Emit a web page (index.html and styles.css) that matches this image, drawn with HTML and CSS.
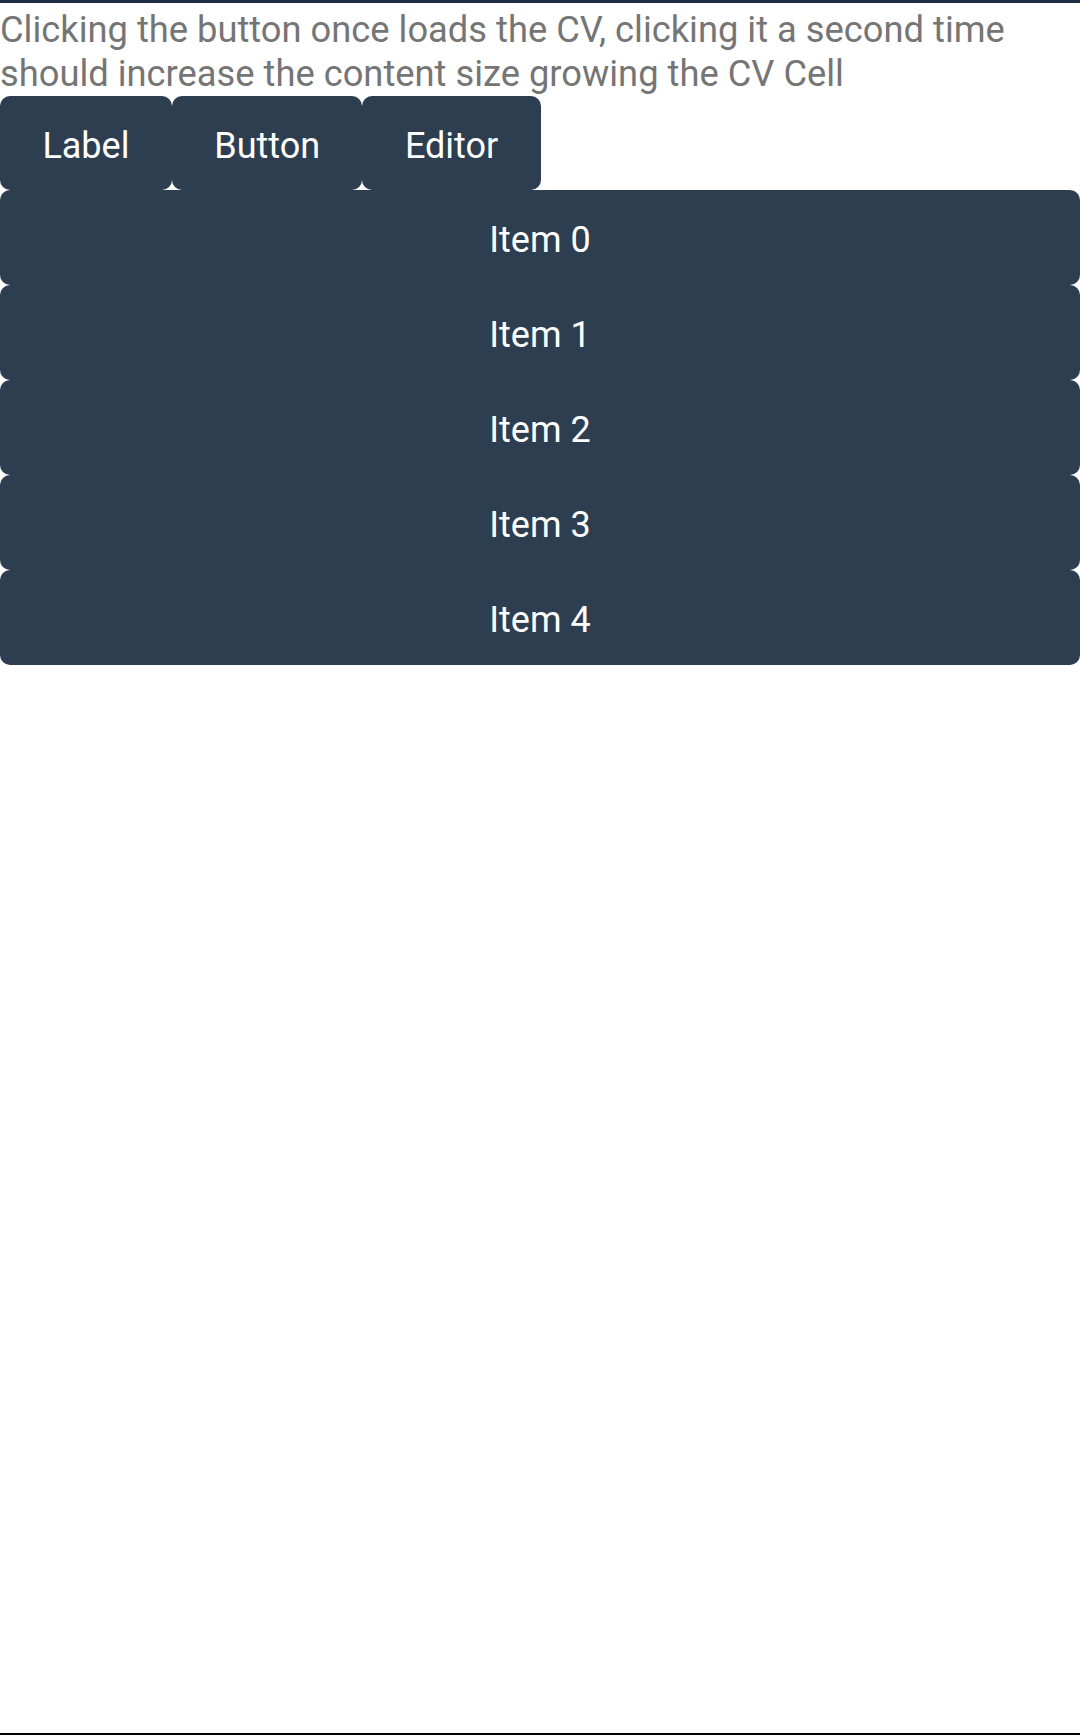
FILE: index.html
```html
<!DOCTYPE html>
<html>
<head>
<meta charset="utf-8">
<link rel="stylesheet" href="styles.css">
</head>
<body>
<div class="page">
  <div class="topbar"></div>
  <p class="desc">Clicking the button once loads the CV, clicking it a second time should increase the content size growing the CV Cell</p>
  <div class="btnrow">
    <div class="btn">Label</div>
    <div class="btn">Button</div>
    <div class="btn">Editor</div>
  </div>
  <div class="items">
    <div class="item">Item 0</div>
    <div class="item">Item 1</div>
    <div class="item">Item 2</div>
    <div class="item">Item 3</div>
    <div class="item">Item 4</div>
  </div>
  <div class="spacer"></div>
  <div class="bottomline"></div>
</div>
</body>
</html>
```
FILE: styles.css
```css
html, body {
  margin: 0;
  padding: 0;
  background: #ffffff;
}
.page {
  width: 1080px;
  height: 1735px;
  display: flex;
  flex-direction: column;
  font-family: Roboto, "Noto Sans", sans-serif;
}
.topbar {
  height: 3px;
  background: #1d2f47;
  flex: none;
}
.desc {
  margin: 0;
  padding: 5px 0 0 0;
  font-size: 36.3px;
  line-height: 44px;
  color: #757575;
  width: 1040px;
}
.btnrow {
  display: flex;
  flex: none;
}
.btn {
  box-sizing: border-box;
  background: #2d3e50;
  color: #ffffff;
  height: 94px;
  padding: 5px 42.4px 0 42.4px;
  border-radius: 10px;
  display: flex;
  align-items: center;
  font-size: 36px;
}
.items {
  display: flex;
  flex-direction: column;
}
.item {
  box-sizing: border-box;
  background: #2d3e50;
  color: #ffffff;
  height: 95px;
  padding-top: 4px;
  border-radius: 10px;
  display: flex;
  align-items: center;
  justify-content: center;
  font-size: 36px;
}
.spacer {
  flex: 1;
}
.bottomline {
  height: 2px;
  background: #000000;
  flex: none;
}
```
